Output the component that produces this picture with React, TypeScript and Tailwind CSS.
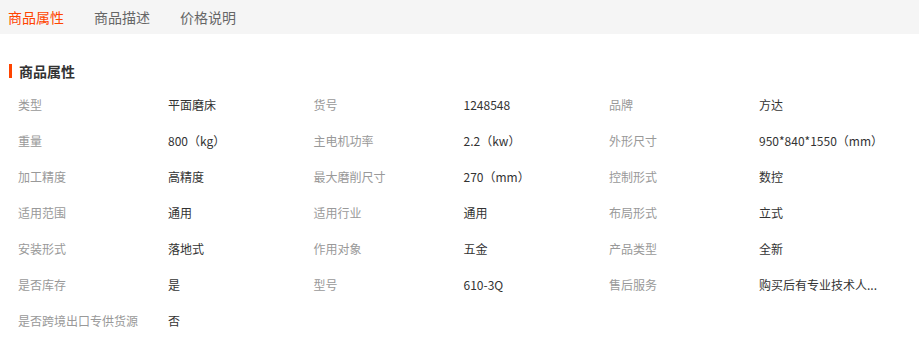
import React from "react";

const rows: [string, string][][] = [
  [["类型", "平面磨床"], ["货号", "1248548"], ["品牌", "方达"]],
  [["重量", "800（kg）"], ["主电机功率", "2.2（kw）"], ["外形尺寸", "950*840*1550（mm）"]],
  [["加工精度", "高精度"], ["最大磨削尺寸", "270（mm）"], ["控制形式", "数控"]],
  [["适用范围", "通用"], ["适用行业", "通用"], ["布局形式", "立式"]],
  [["安装形式", "落地式"], ["作用对象", "五金"], ["产品类型", "全新"]],
  [["是否库存", "是"], ["型号", "610-3Q"], ["售后服务", "购买后有专业技术人..."]],
  [["是否跨境出口专供货源", "否"]],
];

export default function App() {
  return (
    <div
      className="w-[919px] h-[360px] bg-white overflow-hidden"
      style={{ fontFamily: '"Microsoft YaHei", "Noto Sans CJK SC", "Liberation Sans", sans-serif' }}
    >
      <div className="h-[34px] bg-[#f5f5f5] flex items-center text-[14px] leading-none">
        <div className="ml-[8px] text-[#ff4400]">商品属性</div>
        <div className="ml-[30px] text-[#666666]">商品描述</div>
        <div className="ml-[30px] text-[#666666]">价格说明</div>
      </div>
      <div className="flex items-center mt-[29px] h-[16px]">
        <div className="ml-[9px] w-[3px] h-[14px] bg-[#ff4400]" />
        <div className="ml-[7px] text-[14px] font-bold text-[#333333] leading-none">商品属性</div>
      </div>
      <div className="mt-[8px] text-[12px]">
        {rows.map((row, i) => (
          <div key={i} className="flex h-[36px] items-center pl-[18px]">
            {row.map(([k, v], j) => (
              <div key={j} className="flex w-[295.5px] shrink-0 items-center">
                <div className="w-[150px] shrink-0 text-[#999999] whitespace-nowrap">{k}</div>
                <div className="text-[#333333] whitespace-nowrap">{v}</div>
              </div>
            ))}
          </div>
        ))}
      </div>
    </div>
  );
}
